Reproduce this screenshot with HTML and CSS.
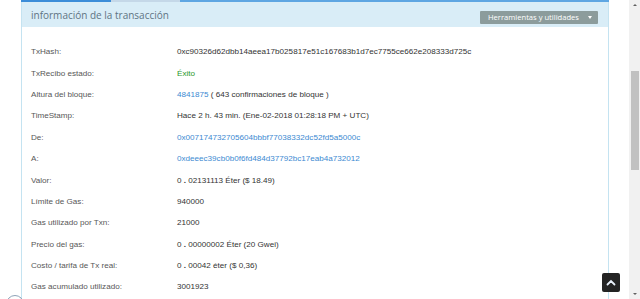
FILE: index.html
```html
<!DOCTYPE html>
<html lang="es">
<head>
<meta charset="utf-8">
<title>información de la transacción</title>
<link rel="stylesheet" href="styles.css">
</head>
<body>
<div class="page">
  <main class="main">
    <section class="panel">
      <div class="topline"><span class="seg seg-a"></span><span class="seg seg-b"></span><span class="seg seg-c"></span></div>
      <header class="heading">
        <h1 class="title">información de la transacción</h1>
        <button class="tools">Herramientas y utilidades <span class="caret"></span></button>
      </header>
      <div class="body">
        <div class="row"><span class="label">TxHash:</span><span class="value">0xc90326d62dbb14aeea17b025817e51c167683b1d7ec7755ce662e208333d725c</span></div>
        <div class="row"><span class="label">TxRecibo estado:</span><span class="value ok">Éxito</span></div>
        <div class="row"><span class="label">Altura del bloque:</span><span class="value"><span class="link">4841875</span> ( 643 confirmaciones de bloque )</span></div>
        <div class="row"><span class="label">TimeStamp:</span><span class="value">Hace 2 h. 43 min. (Ene-02-2018 01:28:18 PM + UTC)</span></div>
        <div class="row"><span class="label">De:</span><span class="value"><span class="link">0x007174732705604bbbf77038332dc52fd5a5000c</span></span></div>
        <div class="row"><span class="label">A:</span><span class="value"><span class="link">0xdeeec39cb0b0f6fd484d37792bc17eab4a732012</span></span></div>
        <div class="row"><span class="label">Valor:</span><span class="value">0 <b class="dot">.</b> 02131113 Éter ($ 18.49)</span></div>
        <div class="row"><span class="label">Límite de Gas:</span><span class="value">940000</span></div>
        <div class="row"><span class="label">Gas utilizado por Txn:</span><span class="value">21000</span></div>
        <div class="row"><span class="label">Precio del gas:</span><span class="value">0 <b class="dot">.</b> 00000002 Éter (20 Gwei)</span></div>
        <div class="row"><span class="label">Costo / tarifa de Tx real:</span><span class="value">0 <b class="dot">.</b> 00042 éter ($ 0,36)</span></div>
        <div class="row"><span class="label">Gas acumulado utilizado:</span><span class="value">3001923</span></div>
      </div>
    </section>
    <span class="totop" aria-label="Volver arriba"><svg width="10" height="7" viewBox="0 0 10 7"><path d="M1.5 5.5 L5 2 L8.5 5.5" fill="none" stroke="#e8f0fa" stroke-width="1.8" stroke-linecap="round"/></svg></span>
    <span class="chat"></span>
  </main>
  <div class="scrollbar">
    <span class="arrow up"></span>
    <span class="track"><span class="thumb"></span></span>
    <span class="arrow down"></span>
  </div>
</div>
</body>
</html>
```

FILE: styles.css
```css
html, body {
  margin: 0;
  padding: 0;
  width: 640px;
  height: 299px;
  overflow: hidden;
  background: #ffffff;
}

.page {
  display: flex;
  width: 640px;
  height: 299px;
}

.main {
  position: relative;
  flex: 1;
  padding-left: 21px;
  padding-right: 20px;
  overflow: hidden;
}

.panel {
  width: 586px;
  height: 320px;
  border-left: 1px solid #c4e3f1;
  border-right: 1px solid #c4e3f1;
  display: flex;
  flex-direction: column;
}

.topline {
  display: flex;
  height: 2px;
  margin-left: -1px;
  margin-right: -1px;
}
.seg { display: block; height: 2px; }
.seg-a { width: 90px; background: #3c8dd8; }
.seg-b { width: 69px; background: #c5d8e8; }
.seg-c { flex: 1; background: #5ea6e2; }

.heading {
  height: 25px;
  background: #d9edf7;
  display: flex;
  align-items: center;
  justify-content: space-between;
  padding: 0 10px 0 9px;
}

.title {
  margin: 0;
  font-family: "Open Sans", sans-serif;
  font-weight: 400;
  font-size: 10px;
  color: #5f7483;
  line-height: 1;
}

.tools {
  height: 13px;
  width: 118px;
  border: 0;
  border-radius: 1px;
  background: #8c9c9c;
  color: #ffffff;
  font-family: "Open Sans", sans-serif;
  font-size: 7.6px;
  padding: 0 6px 0 8px;
  display: flex;
  align-items: center;
  justify-content: space-between;
  margin-top: 5px;
}

.caret {
  width: 0;
  height: 0;
  border-left: 2.5px solid transparent;
  border-right: 2.5px solid transparent;
  border-top: 3px solid #ffffff;
}

.body {
  padding: 14px 9px 0 9px;
  font-family: "Liberation Sans", Arial, sans-serif;
  font-size: 8.1px;
  color: #555555;
}

.row {
  display: flex;
  height: 21.4px;
  align-items: center;
}

.label {
  width: 146px;
  flex: none;
  color: #575757;
}

.value {
  color: #333333;
}

.dot { font-weight: 700; }

.ok { color: #2a982a; }

.link {
  color: #3d8ad2;
}

.totop {
  position: absolute;
  left: 602px;
  top: 273px;
  width: 18px;
  height: 19px;
  background: #232323;
  border-radius: 2px;
  display: flex;
  align-items: center;
  justify-content: center;
}

.chat {
  position: absolute;
  left: 6px;
  top: 295px;
  width: 18px;
  height: 18px;
  border: 1px solid #8ea3b8;
  border-radius: 50%;
  box-sizing: border-box;
}

.scrollbar {
  width: 11px;
  flex: none;
  background: #f1f1f1;
  display: flex;
  flex-direction: column;
  align-items: center;
}

.arrow {
  width: 0;
  height: 0;
  border-left: 2px solid transparent;
  border-right: 2px solid transparent;
  margin: 4px 0;
}
.arrow.up { border-bottom: 2.5px solid #606060; }
.arrow.down { border-top: 2.5px solid #606060; }

.track {
  flex: 1;
  width: 100%;
  display: flex;
  justify-content: center;
}

.thumb {
  margin-top: 61px;
  width: 8px;
  height: 99px;
  background: #c1c1c1;
}
```
